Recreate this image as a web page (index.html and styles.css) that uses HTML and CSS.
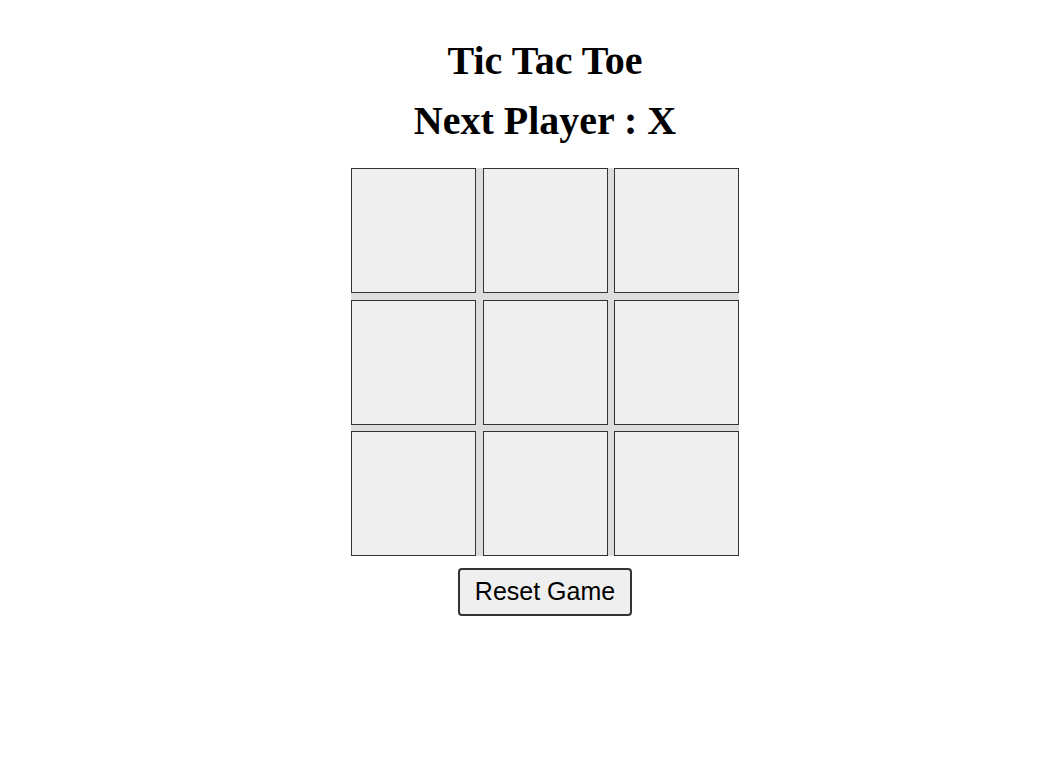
FILE: index.html
```html
<!DOCTYPE html>
<html>
<head>
<meta charset="utf-8">
<link rel="stylesheet" href="styles.css">
</head>
<body>
<div class="game">
  <h1 class="title">Tic Tac Toe</h1>
  <h2 class="status">Next Player : X</h2>
  <div class="board">
    <button class="cell"></button>
    <button class="cell"></button>
    <button class="cell"></button>
    <button class="cell"></button>
    <button class="cell"></button>
    <button class="cell"></button>
    <button class="cell"></button>
    <button class="cell"></button>
    <button class="cell"></button>
  </div>
  <button class="reset">Reset Game</button>
</div>
</body>
</html>
```

FILE: styles.css
```css
html, body {
  margin: 0;
  padding: 0;
  background: #fff;
}
.game {
  display: flex;
  flex-direction: column;
  align-items: center;
  padding: 38px 0 0 51px;
  font-family: "Liberation Serif", "Times New Roman", serif;
  color: #000;
}
.title, .status {
  margin: 0;
  font-size: 40px;
  font-weight: bold;
  line-height: 46px;
}
.status {
  margin-top: 14px;
  margin-bottom: 24px;
}
.board {
  display: grid;
  grid-template-columns: repeat(3, 125px);
  grid-template-rows: repeat(3, 125px);
  gap: 6.5px;
  background: #ddd;
}
.cell {
  box-sizing: border-box;
  width: 125px;
  height: 125px;
  margin: 0;
  padding: 0;
  background: #efefef;
  border: 1px solid #333;
  border-radius: 0;
}
.reset {
  margin-top: 12px;
  box-sizing: border-box;
  height: 48px;
  padding: 0 15px 1px;
  font-family: "Liberation Sans", Arial, sans-serif;
  font-size: 25px;
  color: #000;
  background: #efefef;
  border: 2px solid #333;
  border-radius: 4px;
}
```
